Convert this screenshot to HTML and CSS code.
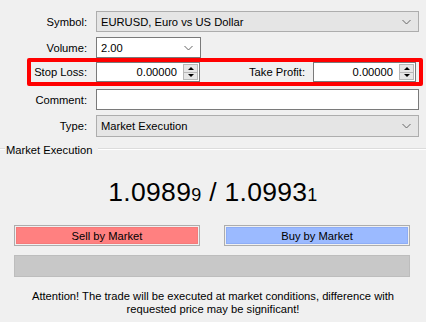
FILE: index.html
```html
<!doctype html>
<html lang="en">
<head>
  <meta charset="UTF-8" />
  <title>Order</title>
  <link rel="stylesheet" href="styles.css">
</head>
<body>
  <div class="order">
    <div class="form">
      <div class="row row-symbol">
        <span class="lbl">Symbol:</span>
        <div class="combo grey wide">
          <span>EURUSD, Euro vs US Dollar</span>
          <svg class="chev" width="9" height="6" viewBox="0 0 9 6"><path d="M0.5 1 L4.5 5 L8.5 1" fill="none" stroke="#666" stroke-width="1"/></svg>
        </div>
      </div>

      <div class="row row-volume">
        <span class="lbl">Volume:</span>
        <div class="combo white volume">
          <span>2.00</span>
          <svg class="chev" width="9" height="6" viewBox="0 0 9 6"><path d="M0.5 1 L4.5 5 L8.5 1" fill="none" stroke="#666" stroke-width="1"/></svg>
        </div>
      </div>

      <div class="row row-stops">
        <span class="lbl lbl-sl">Stop Loss:</span>
        <div class="spin sl">
          <span class="val">0.00000</span>
          <div class="spin-btns">
            <span class="up"></span>
            <span class="down"></span>
          </div>
        </div>
        <span class="lbl lbl-tp">Take Profit:</span>
        <div class="spin tp">
          <span class="val">0.00000</span>
          <div class="spin-btns">
            <span class="up"></span>
            <span class="down"></span>
          </div>
        </div>
      </div>

      <div class="row row-comment">
        <span class="lbl">Comment:</span>
        <div class="text-input wide"></div>
      </div>

      <div class="row row-type">
        <span class="lbl">Type:</span>
        <div class="combo grey wide tall">
          <span>Market Execution</span>
          <svg class="chev" width="9" height="6" viewBox="0 0 9 6"><path d="M0.5 1 L4.5 5 L8.5 1" fill="none" stroke="#666" stroke-width="1"/></svg>
        </div>
      </div>
    </div>

    <div class="group">
      <div class="group-head">
        <span class="line short"></span>
        <span class="group-title">Market Execution</span>
        <span class="line"></span>
      </div>

      <div class="prices">1.0989<small>9</small> / 1.0993<small>1</small></div>

      <div class="buttons">
        <div class="btn sell"><span>Sell by Market</span></div>
        <div class="btn buy"><span>Buy by Market</span></div>
      </div>

      <div class="progress"></div>

      <p class="note">Attention! The trade will be executed at market conditions, difference with<br>requested price may be significant!</p>
    </div>
  </div>
</body>
</html>
```

FILE: styles.css
```css
* {
  box-sizing: border-box;
  margin: 0;
  padding: 0;
}

body {
  background: #f0f0f0;
  font-family: 'Liberation Sans', Arial, sans-serif;
  font-size: 11.2px;
  color: #000;
  width: 426px;
  height: 322px;
  overflow: hidden;
}

.form {
  padding-top: 11px;
}

.row {
  display: flex;
  align-items: center;
  height: 21px;
}

.row-volume { margin-top: 5px; }
.row-comment { margin-top: 3px; }
.row-type { margin-top: 5px; height: 22px; }

.lbl {
  width: 96px;
  padding-right: 9px;
  text-align: right;
  flex-shrink: 0;
}

.combo,
.text-input,
.spin {
  height: 21px;
  display: flex;
  align-items: center;
  padding-left: 4px;
}

.combo {
  justify-content: space-between;
  padding-right: 7px;
}

.combo.grey {
  background: #e5e5e5;
  border: 1px solid #adadad;
}

.combo.white,
.text-input,
.spin {
  background: #fff;
  border: 1px solid #7a7a7a;
}

.wide { width: 323px; }
.tall { height: 22px; }
.volume { width: 105px; }

.chev { display: block; }

/* highlighted stops row */
.row-stops {
  margin-left: 27px;
  width: 396px;
  height: 28px;
  border: 4px solid #f00;
  border-radius: 2px;
}

.lbl-sl {
  width: 65px;
}

.lbl-tp {
  flex: 1;
  width: auto;
  padding-right: 8px;
}

.spin {
  height: 20px;
  padding-left: 0;
  padding-right: 1px;
  justify-content: flex-end;
}

.spin.sl { width: 104px; }
.spin.tp { width: 103px; margin-right: 3px; }

.spin .val {
  padding-right: 6px;
}

.spin-btns {
  width: 15px;
  height: 16px;
  border: 1px solid #b8b8b8;
  background: #e6e6e6;
  display: flex;
  flex-direction: column;
}

.spin-btns span {
  flex: 1;
  display: flex;
  align-items: center;
  justify-content: center;
}

.spin-btns .up {
  border-bottom: 1px solid #b8b8b8;
}

.spin-btns .up::after {
  content: '';
  border-left: 3px solid transparent;
  border-right: 3px solid transparent;
  border-bottom: 3px solid #000;
}

.spin-btns .down::after {
  content: '';
  border-left: 3px solid transparent;
  border-right: 3px solid transparent;
  border-top: 3px solid #000;
}

/* group box */
.group {
  margin-top: 6px;
}

.group-head {
  display: flex;
  align-items: center;
  height: 12px;
}

.group-head .line {
  flex: 1;
  height: 2px;
  border-top: 1px solid #dcdcdc;
  border-bottom: 1px solid #fff;
}

.group-head .line.short {
  flex: 0 0 5px;
}

.group-title {
  padding: 0 6px 0 1px;
  position: relative;
  top: 1px;
}

.prices {
  margin-top: 22px;
  height: 30px;
  text-align: center;
  font-size: 26.5px;
  line-height: 30px;
  letter-spacing: 0.3px;
}

.prices small {
  font-size: 18px;
  line-height: 1;
}

.buttons {
  display: flex;
  justify-content: space-between;
  padding: 0 16px 0 14px;
  margin-top: 18px;
}

.btn {
  width: 186px;
  height: 21px;
  border: 1px solid #adadad;
  padding: 1px;
  background: #f0f0f0;
}

.btn span {
  display: flex;
  align-items: center;
  justify-content: center;
  height: 100%;
}

.sell span {
  background: #ff8080;
  border: 1px solid #f47a7a;
}

.buy span {
  background: #9bbaff;
  border: 1px solid #8eadf5;
}

.progress {
  margin: 9px 16px 0 14px;
  height: 22px;
  background: #c8c8c8;
  border: 1px solid #bdbdbd;
}

.note {
  margin-top: 13px;
  text-align: center;
  line-height: 13px;
}
```
